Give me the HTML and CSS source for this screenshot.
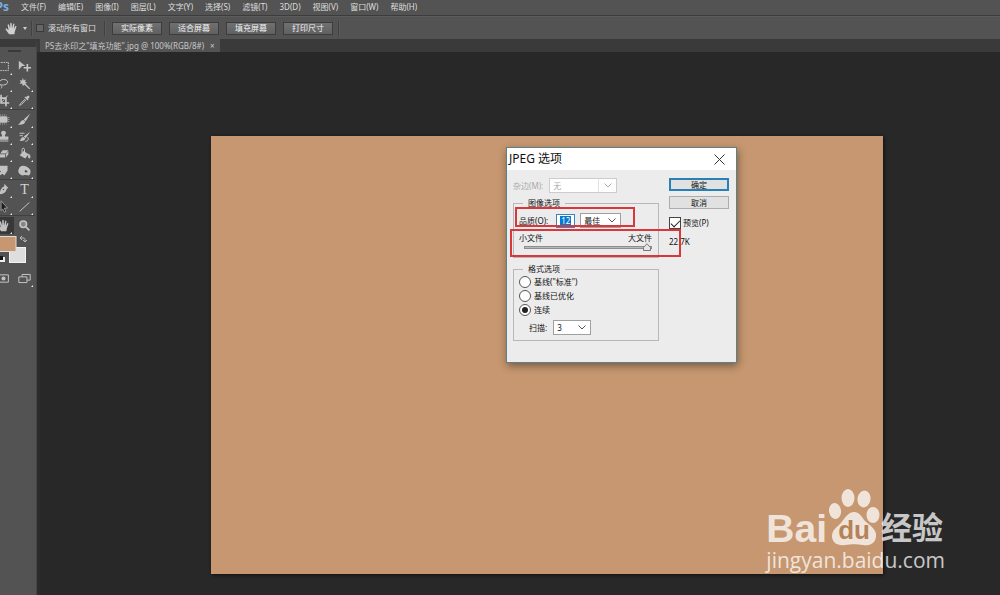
FILE: index.html
```html
<!DOCTYPE html>
<html lang="zh-CN">
<head>
<meta charset="utf-8">
<title>PS去水印之"填充功能".jpg</title>
<link rel="stylesheet" href="styles.css">
</head>
<body>
<div class="app">
  <nav class="menubar">
    <span class="logo">Ps</span>
    <button>文件(F)</button><button>编辑(E)</button><button>图像(I)</button><button>图层(L)</button><button>文字(Y)</button><button>选择(S)</button><button>滤镜(T)</button><button>3D(D)</button><button>视图(V)</button><button>窗口(W)</button><button>帮助(H)</button>
  </nav>

  <div class="options">
    <svg class="hand" viewBox="0 0 16 16"><path d="M5 15 1 9.500c-.8-1.200.6-2 1.500-1l2 1.800L3.300 4c-.2-1.300 1.300-1.500 1.700-.3L6.300 8 6.500 2c.1-1.300 1.700-1.300 1.800 0L8.600 8 10 2.700c.4-1.200 1.800-.8 1.600.4L10.900 8.500l1.600-3c.6-1.100 1.900-.5 1.500.7L12.300 11 11.500 15z"/></svg>
    <svg class="caret" viewBox="0 0 4 3"><path d="M0 0h4L2 3z"/></svg>
    <i class="rule"></i>
    <label class="scroll-all"><input type="checkbox">滚动所有窗口</label>
    <i class="rule"></i>
    <div class="option-buttons">
      <button>实际像素</button><button>适合屏幕</button><button>填充屏幕</button><button>打印尺寸</button>
    </div>
    <i class="rule"></i>
  </div>

  <div class="workspace">
    <aside class="tools">
      <div class="grip"></div>
      <div class="tool-grid">
        <button class="tool more" aria-label="选框"><svg viewBox="0 0 16 16"><path class="line dash" d="M2 3h12v10H2z"/></svg></button>
        <button class="tool" aria-label="移动"><svg viewBox="0 0 16 16"><path d="M1 1l8 6.500H5L1 12z"/><path class="line bold" d="M11.500 5v9M7 9.500h9"/></svg></button>
        <button class="tool more" aria-label="套索"><svg viewBox="0 0 16 16"><path class="line" d="M5 10C1 8 3 3 8 3s7 4 3 6-6 0-6 1 2 2 0 4"/></svg></button>
        <button class="tool more" aria-label="魔棒"><svg viewBox="0 0 16 16"><path d="M6 1l1 3 3-1-1.500 2.500L11 7 9 8 15 14l-1 1-6-5.500L6 11 5 8 2 8.500 3.500 6 2 4l3 .3z"/></svg></button>
        <button class="tool more" aria-label="裁剪"><svg viewBox="0 0 16 16"><path class="line bold" d="M5 1v10h10M1 5h10v10"/><path class="line" d="M5 11l8-9"/></svg></button>
        <button class="tool more" aria-label="吸管"><svg viewBox="0 0 16 16"><path class="line" d="M9 6l-6 6-1 2 2-1 6-6"/><path d="M8 4l1-1 1 1c2-3 4-2 4-1s0 2-2 3l1 1-1 1z"/></svg></button>
        <hr>
        <button class="tool more" aria-label="修补"><svg viewBox="0 0 16 16"><rect x="3" y="4" width="10" height="8" rx="2"/><path class="line" stroke-dasharray="1 1.500" d="M4 2.500h8M4 13.500h8M1.500 5v6M14.500 5v6"/></svg></button>
        <button class="tool more" aria-label="画笔"><svg viewBox="0 0 16 16"><path d="M15 1 9.500 10 7 8zM6.500 8.500 9 10.500C8 14 4 15 0 14c3-1 3-5 6.500-5.500"/></svg></button>
        <button class="tool more" aria-label="图章"><svg viewBox="0 0 16 16"><path d="M6 8c1-2-1-3-1-4 0-4 6-4 6 0 0 1-2 2-1 4h4v4H2V8zM2 13h12v1H2z"/></svg></button>
        <button class="tool more" aria-label="历史画笔"><svg viewBox="0 0 16 16"><path d="M15 2 9.500 10 7 8zM6.500 8.500 9 10.500C8 14 4 14 1 13c3 0 2-4 5.500-4.500"/><path class="line" d="M2 4h6M2 7h4M12 9c2 3-1 5-3 5"/></svg></button>
        <button class="tool more" aria-label="橡皮擦"><svg viewBox="0 0 16 16"><path d="M7 4h7l-3 4H4zM3 9h7v4H1zM11 9l3-4v4l-3 4z"/></svg></button>
        <button class="tool more" aria-label="油漆桶"><svg viewBox="0 0 16 16"><path d="M7 5l6 4-4 5-7-4zM13 8c3 2 3 6 1 6s-2-2-1-6"/><path class="line" d="M5 8V3c0-2 3-2 3 0v4"/></svg></button>
        <button class="tool more" aria-label="涂抹"><svg viewBox="0 0 16 16"><path d="M3 2h10v6l-4 6-2-2-5 3-1-2 4-4-2-1z"/></svg></button>
        <button class="tool more" aria-label="海绵"><svg viewBox="0 0 16 16"><path fill-rule="evenodd" d="M1 6c2-6 10-4 14 1 1 2 0 7-2 7-3 0-3-1-7 0C2 14-1 10 1 6m9 1.500a2 1.500 0 1 0 2 2z"/></svg></button>
        <hr>
        <button class="tool more" aria-label="钢笔"><svg viewBox="0 0 16 16"><path fill-rule="evenodd" d="M9 1l5 5-2 1c-1 5-4 6-9 7 1-5 2-8 6-10zM8 7a1 1 0 1 0 1 1z"/></svg></button>
        <button class="tool more type">T</button>
        <button class="tool more" aria-label="路径选择"><svg viewBox="0 0 16 16"><path class="pointer" d="M5 1l8 9H9l2 4-2 1-2-4-2 2z"/></svg></button>
        <button class="tool more" aria-label="直线"><svg viewBox="0 0 16 16"><path class="line" d="M2 14 14 3"/></svg></button>
        <hr>
        <button class="tool more active" aria-label="抓手"><svg viewBox="0 0 16 16"><path d="M5 15 1 9.500c-.8-1.200.6-2 1.500-1l2 1.800L3.300 4c-.2-1.300 1.300-1.500 1.700-.3L6.300 8 6.500 2c.1-1.300 1.700-1.300 1.800 0L8.600 8 10 2.700c.4-1.200 1.800-.8 1.600.4L10.900 8.500l1.600-3c.6-1.100 1.900-.5 1.500.7L12.300 11 11.500 15z"/></svg></button>
        <button class="tool" aria-label="缩放"><svg viewBox="0 0 16 16"><circle class="line glass" cx="6.500" cy="6.500" r="4"/><path class="line bold" d="M10 10l4 4"/></svg></button>
      </div>
      <svg class="swatches" viewBox="0 0 37 30">
        <rect x="9.500" y="12.500" width="16" height="15" fill="#dedede" stroke="#f2f2f2"/>
        <rect x="-1" y="1.500" width="17" height="15" fill="#c69770" stroke="#ddd"/>
        <path d="M21 3h2c2 0 2 1 2 3M22 1l-2 2 2 2M23 5l2 2 2-2" fill="none" stroke="#bbb"/>
        <path d="M0 22h5v5H0z" fill="#eee"/><path d="M-1 21h4v4h-4z" fill="#181818"/>
      </svg>
      <div class="tool-grid modes">
        <button class="tool" aria-label="快速蒙版"><svg viewBox="0 0 16 16"><path class="line" d="M2 3.500h12v9H2z"/><circle cx="8" cy="8" r="2.500"/></svg></button>
        <button class="tool more" aria-label="屏幕模式"><svg viewBox="0 0 16 16"><path class="line" d="M5 3h10v7H5z"/><path class="line box" d="M1 6h10v7H1z"/></svg></button>
      </div>
    </aside>

    <main class="document">
      <div class="tabs"><div class="tab"><span>PS去水印之"填充功能".jpg @ 100%(RGB/8#)</span><button aria-label="关闭">×</button></div></div>
      <div class="stage"><div class="picture"></div></div>
    </main>
  </div>

  <section class="dialog" role="dialog" aria-labelledby="dialog-title">
    <header class="dialog-title">
      <h1 id="dialog-title">JPEG 选项</h1>
      <button aria-label="关闭"><svg viewBox="0 0 11 11"><path d="M.5.5l10 10M10.500.5l-10 10"/></svg></button>
    </header>
    <div class="dialog-body">
      <div class="settings">
        <div class="row muted">
          <label for="matte">杂边(M):</label>
          <span class="pick matte"><select id="matte" disabled><option>无</option></select><svg viewBox="0 0 8 5"><path d="M.5.5 4 4 7.500.5"/></svg></span>
        </div>
        <fieldset class="image-options">
          <legend>图像选项</legend>
          <div class="row">
            <label for="quality">品质(O):</label>
            <span class="number"><input id="quality" type="text" value="12"></span>
            <span class="pick level"><select aria-label="品质等级"><option>最佳</option></select><svg viewBox="0 0 8 5"><path d="M.5.5 4 4 7.500.5"/></svg></span>
          </div>
          <div class="ends"><label for="size">小文件</label><span>大文件</span></div>
          <input id="size" class="slider" type="range" min="0" max="12" value="12">
        </fieldset>
        <fieldset class="format-options">
          <legend>格式选项</legend>
          <label class="choice"><input type="radio" name="format">基线("标准")</label>
          <label class="choice"><input type="radio" name="format">基线已优化</label>
          <label class="choice"><input type="radio" name="format" checked>连续</label>
          <div class="row scans">
            <label for="scans">扫描:</label>
            <span class="pick passes"><select id="scans"><option>3</option></select><svg viewBox="0 0 8 5"><path d="M.5.5 4 4 7.500.5"/></svg></span>
          </div>
        </fieldset>
      </div>
      <div class="actions">
        <button class="primary">确定</button>
        <button>取消</button>
        <label class="preview"><input type="checkbox" checked>预览(P)</label>
        <output>22.7K</output>
      </div>
    </div>
    <div class="mark mark-quality"></div>
    <div class="mark mark-size"></div>
  </section>

  <div class="watermark">
    <div class="brand">
      <span class="bai">Bai</span>
      <span class="paw">
        <svg viewBox="0 0 52 57"><ellipse cx="7" cy="22" rx="6" ry="8" transform="rotate(-8 7 22)"/><ellipse cx="20" cy="9" rx="6.500" ry="9"/><ellipse cx="36" cy="10" rx="6.500" ry="8.500" transform="rotate(10 36 10)"/><ellipse cx="45" cy="26" rx="6.500" ry="8"/><path d="M26 23c6 0 8 6 12 10 5 4 11 8 10 15s-7 9-13 8c-7-1-11-1-18 0C10 57 4 54 4 47c0-6 5-9 9-13 4-5 7-11 13-11z"/></svg>
        <b>du</b>
      </span>
      <span class="jingyan">经验</span>
    </div>
    <div class="address">jingyan.baidu.com</div>
  </div>
</div>
</body>
</html>
```
FILE: styles.css
```css
* { box-sizing: border-box; }

body {
  margin: 0;
  background: #282828;
  color: #dedede;
  font: 8px/10px "Noto Sans", "Noto Sans CJK SC", sans-serif;
}

button, input, select { margin: 0; padding: 0; border: 0; font: inherit; color: inherit; background: none; }
input, select { appearance: none; }
svg { display: block; }

.app { position: relative; display: flex; flex-direction: column; min-height: 100vh; overflow: hidden; }

/* Menu bar */
.menubar { display: flex; align-items: center; gap: 12px; height: 16px; padding-bottom: 2px; background: #535353; border-bottom: 1px solid #3c3c3c; white-space: nowrap; }
.logo { width: 9px; display: flex; justify-content: flex-end; color: #79afe0; font: bold 12px/14px "Open Sans", sans-serif; }

/* Options bar */
.options { display: flex; align-items: center; height: 23px; padding-left: 5px; background: #535353; border-top: 1px solid #5c5c5c; }
.hand { width: 13px; height: 13px; fill: #d0d0d0; }
.caret { width: 4px; height: 3px; margin-left: 5px; fill: #d0d0d0; }
.rule { width: 2px; height: 15px; margin: 0 3px 0 4px; background: #414141; border-right: 1px solid #5b5b5b; }
.scroll-all { display: flex; align-items: center; gap: 4px; margin-right: 4px; white-space: nowrap; }
.scroll-all input { width: 8px; height: 8px; background: #666; border: 1px solid #3a3a3a; }
.option-buttons { display: flex; gap: 7px; margin: 0 1px 0 3px; }
.option-buttons button { width: 50px; height: 13px; background: linear-gradient(#717171, #606060); border: 1px solid #3c3c3c; line-height: 10px; color: #f0f0f0; }

/* Workspace */
.workspace { display: flex; flex: 1; gap: 3px; background: linear-gradient(#3a3a3a 0 13px, #2b2b2b 13px); }
.tools { width: 37px; padding-top: 8px; background: #535353; border-top: 8px solid #3a3a3a; overflow: hidden; border-right: 1px solid #464646; }
.grip { width: 13px; height: 2px; margin: -5px 0 0 8px; background: #3a3a3a; }
.tool-grid { display: grid; grid-template-columns: 21px 21px; margin: 6px 0 0 -7px; }
.tool-grid hr { grid-column: 1 / 3; width: 100%; height: 1px; margin: 0 0 1px; border: 0; background: #404040; }
.tool { position: relative; height: 17px; display: grid; place-items: center; }
.tool svg { width: 13px; height: 13px; fill: #c2c2c2; }
.tool .line { fill: none; stroke: #c6c6c6; stroke-width: 1.2; }
.tool .bold { stroke-width: 2; }
.tool .glass { fill: #858585; stroke-width: 2; }
.tool .dash { stroke-dasharray: 2 1; }
.tool .box { fill: #535353; }
.tool .pointer { fill: #1c1c1c; stroke: #aaa; }
.more::after { content: ""; position: absolute; right: 2px; bottom: 0; border: 1px solid; border-color: transparent #eee #eee transparent; }
.active { background: #383838; }
.type { font: 14px/16px "Liberation Serif", serif; color: #d4d4d4; }
.swatches { width: 37px; height: 30px; margin-top: 1px; }
.modes { margin-top: 5px; }

/* Document */
.document { flex: 1; display: flex; flex-direction: column; }
.tabs { height: 13px; display: flex; }
.tab { display: flex; align-items: center; gap: 6px; padding: 0 5px; background: #535353; color: #c8c8c8; white-space: nowrap; }
.stage { flex: 1; display: flex; padding: 84px 117px 21px 171px; background: #282828; }
.picture { flex: 1; background: #c69770; box-shadow: 1px 1px 3px #111; }

/* JPEG options dialog */
.dialog { position: absolute; left: 506px; top: 147px; width: 231px; background: #ececec; border: 1px solid #5c8088; color: #111; box-shadow: 1px 3px 8px #0006; white-space: nowrap; }
.dialog-title { display: flex; justify-content: space-between; align-items: center; height: 22px; padding: 0 11px 0 2px; background: #fff; }
.dialog-title h1 { margin: 0; font-size: 12px; line-height: 18px; font-weight: normal; }
.dialog-title svg { width: 11px; height: 11px; fill: none; stroke: #333; }
.dialog-body { display: flex; gap: 10px; padding: 8px 7px 21px 6px; }
.settings { flex: 1; display: flex; flex-direction: column; }
.row { display: flex; align-items: center; }
.muted { color: #aaa; gap: 6px; margin-bottom: 5px; }
.pick { display: grid; height: 15px; background: #fff; border: 1px solid #a0a0a0; }
.pick select, .pick svg { grid-area: 1 / 1; }
.pick select { width: 100%; padding-left: 3px; opacity: 1; }
.pick svg { width: 8px; height: 5px; place-self: center end; margin-right: 4px; fill: none; stroke: #555; pointer-events: none; }
.matte { width: 68px; border-color: #ccc; }
.matte select { border-right: 1px solid #e2e2e2; width: 49px; }
.matte svg { stroke: #aaa; }
fieldset { min-width: 0; margin: 0; padding: 0 5px; border: 1px solid #b8b8b8; }
legend { margin-left: 4px; padding: 0 5px; }
.image-options { height: 60px; padding-top: 5px; }
.number { display: flex; align-items: center; justify-content: center; width: 19px; height: 14px; margin: 0 5px 0 8px; background: #fff; border: 1px solid #3686bd; }
.number input { width: 11px; height: 10px; background: #0878d0; color: #fff; text-align: center; }
.level { width: 41px; }
.ends { display: flex; justify-content: space-between; margin: 5px 1px 0 0; }
.slider { display: block; width: 128px; height: 8px; margin: 0 0 0 5px; }
.slider::-webkit-slider-runnable-track { height: 3px; background: #b8b8b8; border: 1px solid #8e8e8e; }
.slider::-webkit-slider-thumb {
  appearance: none;
  width: 8px;
  height: 8px;
  margin-top: -4px;
  background: url("data:image/svg+xml,%3Csvg xmlns='http://www.w3.org/2000/svg' viewBox='0 0 8 8'%3E%3Cpath d='M4 .7 7.500 4.500v3h-7v-3z' fill='%23e4e4e4' stroke='%23777'/%3E%3C/svg%3E");
}
.format-options { height: 77px; margin-top: 6px; padding-top: 1px; }
.choice { display: flex; align-items: center; gap: 3px; height: 14px; }
.choice input { display: grid; place-items: center; width: 12px; height: 12px; background: #fff; border: 1px solid #555; border-radius: 50%; }
.choice input:checked::before { content: ""; width: 6px; height: 6px; border-radius: 50%; background: #222; }
.scans { gap: 6px; margin: 3px 0 0 10px; }
.passes { width: 38px; }
.actions { width: 60px; display: flex; flex-direction: column; }
.actions button { height: 13px; margin-bottom: 5px; background: #e1e1e1; border: 1px solid #adadad; line-height: 10px; }
.actions .primary { border: 2px solid #2880b4; line-height: 9px; }
.preview { display: flex; align-items: center; gap: 2px; margin: 3px 0 8px; }
.preview input { display: grid; place-items: center; width: 12px; height: 12px; background: #fff; border: 1px solid #444; }
.preview input:checked::before { content: ""; width: 8px; height: 4px; border: solid #222; border-width: 0 0 1px 1px; rotate: -45deg; translate: 0 -1px; }

/* Highlight frames drawn over the dialog */
.mark { position: absolute; border: 2px solid #d8383c; }
.mark-quality { left: 8px; top: 59px; width: 120px; height: 20px; }
.mark-size { left: 3px; top: 81px; width: 171px; height: 28px; }

/* Watermark */
.watermark { position: absolute; right: 55px; bottom: 22px; color: #fff; fill: #fff; opacity: 0.74; }
.brand { display: flex; align-items: flex-end; gap: 1px; }
.bai { font: bold 39px/36px "Liberation Sans", sans-serif; }
.paw { position: relative; width: 52px; margin-bottom: 1px; }
.paw svg { width: 52px; height: 57px; }
.paw b { position: absolute; left: 0; right: 0; bottom: 0; text-align: center; font: bold 26px/32px "Liberation Sans", sans-serif; color: #b07c52; }
.jingyan { margin-bottom: 4px; font: bold 31px/34px "Noto Sans CJK SC", sans-serif; }
.address { font: 21px/26px "Open Sans", sans-serif; }
```
